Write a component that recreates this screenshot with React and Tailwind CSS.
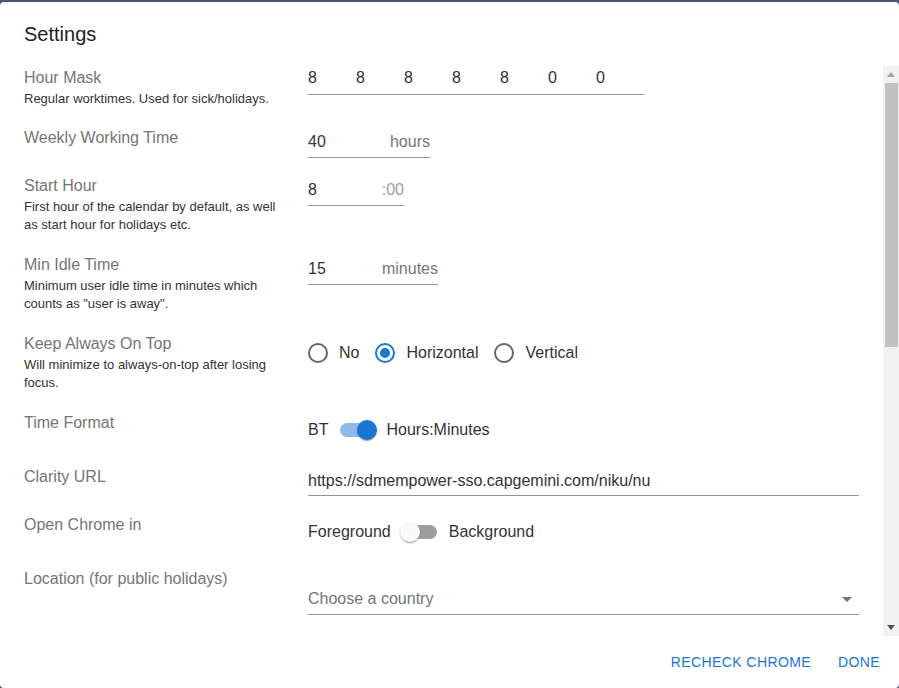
import React from "react";

const Row = ({ label, desc, h, children }) => (
  <div className={`flex ${h}`}>
    <div className="w-[264px] mr-5 shrink-0">
      <div className="text-base leading-6 text-[#757575]">{label}</div>
      {desc && <p className="text-[13px] leading-[18px] text-[#333]">{desc}</p>}
    </div>
    <div className="flex-1">{children}</div>
  </div>
);

const Radio = ({ checked, label }) => (
  <div className="flex items-center gap-[9px]">
    <svg width="24" height="24" viewBox="0 0 24 24">
      <circle
        cx="12"
        cy="12"
        r="9"
        fill="none"
        strokeWidth="2"
        stroke={checked ? "#1976d2" : "#666666"}
      />
      {checked && <circle cx="12" cy="12" r="5" fill="#1976d2" />}
    </svg>
    <span className="text-base leading-6 text-[#333]">{label}</span>
  </div>
);

const Switch = ({ checked }) => (
  <div className="relative w-[58px] h-[38px] p-3 shrink-0">
    <div
      className={
        checked
          ? "w-[34px] h-[14px] rounded-full bg-[#8cbbe9]"
          : "w-[34px] h-[14px] rounded-full bg-[#9e9e9e]"
      }
    />
    <div
      className={
        checked
          ? "absolute top-[9px] left-[29px] w-5 h-5 rounded-full bg-[#1976d2] shadow-[0_2px_1px_-1px_rgba(0,0,0,0.2),0_1px_1px_0_rgba(0,0,0,0.14),0_1px_3px_0_rgba(0,0,0,0.12)]"
          : "absolute top-[9px] left-[9px] w-5 h-5 rounded-full bg-[#fafafa] shadow-[0_2px_1px_-1px_rgba(0,0,0,0.2),0_1px_1px_0_rgba(0,0,0,0.14),0_1px_3px_0_rgba(0,0,0,0.12)]"
      }
    />
  </div>
);

const App = () => {
  const mask = ["8", "8", "8", "8", "8", "0", "0"];

  return (
    <div className="h-[688px] bg-[#4a586e] pt-[2px] font-['Liberation_Sans',Arial,sans-serif]">
      <div className="h-[686px] bg-white rounded-[4px] flex flex-col overflow-hidden">
        <h2 className="px-6 py-4 text-xl leading-8 text-[#212121]">Settings</h2>

        <div className="flex h-[570px]">
          <div className="flex-1 px-6 overflow-hidden">
            <Row
              label="Hour Mask"
              desc="Regular worktimes. Used for sick/holidays."
              h="h-[60px]"
            >
              <div className="flex w-[336px] border-b border-[#949494] pb-[4px]">
                {mask.map((d, i) => (
                  <span key={i} className="w-12 text-base leading-6 text-[#333]">
                    {d}
                  </span>
                ))}
              </div>
            </Row>

            <Row label="Weekly Working Time" h="h-[48px]">
              <div className="mt-[4px] flex justify-between w-[122px] border-b border-[#949494] pb-[3px] text-base leading-6">
                <span className="text-[#333]">40</span>
                <span className="text-[#757575]">hours</span>
              </div>
            </Row>

            <Row
              label="Start Hour"
              desc="First hour of the calendar by default, as well as start hour for holidays etc."
              h="h-[79px]"
            >
              <div className="mt-[4px] flex justify-between w-[96px] border-b border-[#949494] pb-[3px] text-base leading-6">
                <span className="text-[#333]">8</span>
                <span className="text-[#9e9e9e]">:00</span>
              </div>
            </Row>

            <Row
              label="Min Idle Time"
              desc={'Minimum user idle time in minutes which counts as "user is away".'}
              h="h-[79px]"
            >
              <div className="mt-[4px] flex justify-between w-[130px] border-b border-[#949494] pb-[3px] text-base leading-6">
                <span className="text-[#333]">15</span>
                <span className="text-[#757575]">minutes</span>
              </div>
            </Row>

            <Row
              label="Keep Always On Top"
              desc="Will minimize to always-on-top after losing focus."
              h="h-[79px]"
            >
              <div className="h-[42px] -ml-[2px] flex items-center gap-[14px]">
                <Radio label="No" />
                <Radio label="Horizontal" checked />
                <Radio label="Vertical" />
              </div>
            </Row>

            <Row label="Time Format" h="h-[54px]">
              <div className="flex items-center text-base leading-6 text-[#333]">
                <span>BT</span>
                <Switch checked />
                <span>Hours:Minutes</span>
              </div>
            </Row>

            <Row label="Clarity URL" h="h-[48px]">
              <div className="mt-[4px] border-b border-[#949494] pb-[2px] text-base leading-6 text-[#333]">
                https://sdmempower-sso.capgemini.com/niku/nu
              </div>
            </Row>

            <Row label="Open Chrome in" h="h-[54px]">
              <div className="flex items-center text-base leading-6 text-[#333]">
                <span>Foreground</span>
                <Switch />
                <span>Background</span>
              </div>
            </Row>

            <Row label="Location (for public holidays)" h="h-[80px]">
              <div className="mt-[20px] flex items-center justify-between border-b border-[#949494] pb-[3px] text-base leading-6">
                <span className="text-[#757575]">Choose a country</span>
                <svg width="24" height="24" viewBox="0 0 24 24">
                  <path d="M7 10l5 5 5-5z" fill="#757575" />
                </svg>
              </div>
            </Row>
          </div>

          <div className="w-4 shrink-0 bg-[#f1f1f1] flex flex-col">
            <div className="h-[17px] flex items-center justify-center">
              <svg width="8" height="5" viewBox="0 0 8 5">
                <path d="M0 5L4 0L8 5Z" fill="#a3a3a3" />
              </svg>
            </div>
            <div className="ml-[2px] mr-px h-[264px] bg-[#c1c1c1]" />
            <div className="flex-1" />
            <div className="h-[17px] flex items-center justify-center">
              <svg width="8" height="5" viewBox="0 0 8 5">
                <path d="M0 0L8 0L4 5Z" fill="#505050" />
              </svg>
            </div>
          </div>
        </div>

        <div className="h-[52px] flex items-center justify-end gap-2 p-2">
          <button className="px-2 py-1.5 min-w-16 text-sm leading-6 uppercase tracking-[0.4px] text-[#1976d2]">
            Recheck Chrome
          </button>
          <button className="px-2 py-1.5 min-w-16 text-sm leading-6 uppercase tracking-[0.4px] text-[#1976d2]">
            Done
          </button>
        </div>
      </div>
    </div>
  );
};

export default App;
